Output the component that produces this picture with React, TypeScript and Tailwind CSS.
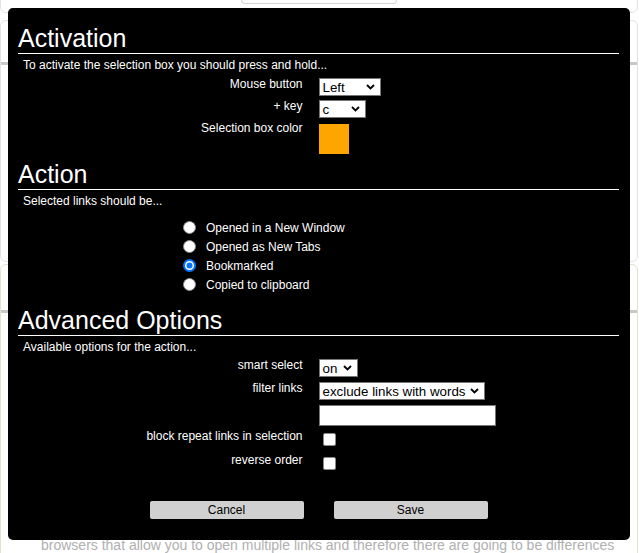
import React from "react";

function Chevron() {
  return (
    <svg width="9" height="6" viewBox="0 0 9 6" className="shrink-0">
      <path d="M1 1L4.5 4.5L8 1" fill="none" stroke="#000" strokeWidth="1.8" />
    </svg>
  );
}

function FakeSelect({ value, className }: { value: string; className: string }) {
  return (
    <div
      className={`flex h-[18px] items-center justify-between border border-[#767676] bg-white pl-[3px] pr-[5px] text-[13.33px] leading-[16px] text-black ${className}`}
    >
      <span className="mt-px">{value}</span>
      <Chevron />
    </div>
  );
}

function Row({
  label,
  children,
  className,
}: {
  label: string;
  children: React.ReactNode;
  className: string;
}) {
  return (
    <div className={`grid grid-cols-2 items-start ${className}`}>
      <div className="-mt-px pr-[16px] text-right text-[12px] leading-[14px]">{label}</div>
      <div className="flex items-start">{children}</div>
    </div>
  );
}

function Radio({ label, checked }: { label: string; checked?: boolean }) {
  return (
    <div className="flex h-[19px] items-start">
      <svg width="13" height="13" viewBox="0 0 13 13" className="mt-[2px] shrink-0">
        {checked ? (
          <>
            <circle cx="6.5" cy="6.5" r="5.5" fill="#fff" stroke="#0075ff" strokeWidth="2" />
            <circle cx="6.5" cy="6.5" r="3" fill="#0075ff" />
          </>
        ) : (
          <circle cx="6.5" cy="6.5" r="6" fill="#fff" stroke="#8a8a8a" strokeWidth="1" />
        )}
      </svg>
      <span className="ml-[10px] text-[12px] leading-[19px]">{label}</span>
    </div>
  );
}

function Checkbox() {
  return <div className="ml-[4px] mt-[3px] h-[13px] w-[13px] rounded-[2px] border border-[#8a8a8a] bg-white" />;
}

function Heading({ children, className }: { children: React.ReactNode; className: string }) {
  return (
    <h2 className={`border-b border-white text-[25px] font-normal leading-[30px] ${className}`}>{children}</h2>
  );
}

export default function App() {
  return (
    <div className="relative h-[553px] w-[639px] overflow-hidden bg-white font-['Liberation_Sans',Arial,sans-serif]">
      {/* background page */}
      <div className="flex flex-col pr-[1px]">
        <div className="-mt-[20px] flex h-[33px] justify-center rounded-b-[6px] border border-[#e2e2e2]">
          <div className="mt-[19px] h-[4px] w-[156px] rounded-b-[4px] border border-t-0 border-[#d4d4d4]" />
        </div>
        <div className="mt-[7px] flex h-[242px] flex-col rounded-[6px] border border-[#e2e2e2]">
          <div className="mt-[41px] h-[3px] bg-[#c8c8c8]" />
        </div>
        <div className="mt-[2px] flex h-[300px] flex-col rounded-t-[6px] border border-[#e6e0d2]">
          <div className="mt-[45px] h-[3px] bg-[#c8c8c8]" />
          <p className="mt-[224px] pl-[40px] text-[14px] leading-[16px] text-[#b0b0b0]">
            browsers that allow you to open multiple links and therefore there are going to be differences
          </p>
        </div>
      </div>

      {/* modal */}
      <div className="absolute left-[8px] top-[8px] flex h-[532px] w-[622px] flex-col rounded-[5px] bg-black pl-[10px] pr-[11px] pt-[15px] text-white">
        <Heading className="">Activation</Heading>
        <p className="mt-[4px] pl-[5px] text-[12px] leading-[14px]">
          To activate the selection box you should press and hold...
        </p>
        <Row label="Mouse button" className="mt-[6px]">
          <FakeSelect value="Left" className="w-[62px]" />
        </Row>
        <Row label="+ key" className="mt-[4px]">
          <FakeSelect value="c" className="w-[47px]" />
        </Row>
        <Row label="Selection box color" className="mt-[4px]">
          <div className="mt-[2px] h-[30px] w-[30px] bg-[#ffa500]" />
        </Row>

        <Heading className="mt-[5px]">Action</Heading>
        <p className="mt-[4px] pl-[5px] text-[12px] leading-[14px]">Selected links should be...</p>
        <div className="mt-[11px] flex flex-col pl-[165px]">
          <Radio label="Opened in a New Window" />
          <Radio label="Opened as New Tabs" />
          <Radio label="Bookmarked" checked />
          <Radio label="Copied to clipboard" />
        </div>

        <Heading className="mt-[10px]">Advanced Options</Heading>
        <p className="mt-[4px] pl-[5px] text-[12px] leading-[14px]">Available options for the action...</p>
        <Row label="smart select" className="mt-[5px]">
          <FakeSelect value="on" className="w-[39px]" />
        </Row>
        <Row label="filter links" className="mt-[5px]">
          <FakeSelect value="exclude links with words" className="w-[166px]" />
        </Row>
        <div className="mt-[5px] grid grid-cols-2">
          <div />
          <div className="h-[21px] w-[177px] border border-[#767676] bg-white" />
        </div>
        <Row label="block repeat links in selection" className="mt-[4px]">
          <Checkbox />
        </Row>
        <Row label="reverse order" className="mt-[8px]">
          <Checkbox />
        </Row>

        <div className="mt-[31px] flex justify-center gap-[30px]">
          <button className="h-[18px] w-[154px] rounded-[2px] bg-[#d0d0d0] text-[12px] leading-[18px] text-black">
            Cancel
          </button>
          <button className="h-[18px] w-[154px] rounded-[2px] bg-[#d0d0d0] text-[12px] leading-[18px] text-black">
            Save
          </button>
        </div>
      </div>
    </div>
  );
}
